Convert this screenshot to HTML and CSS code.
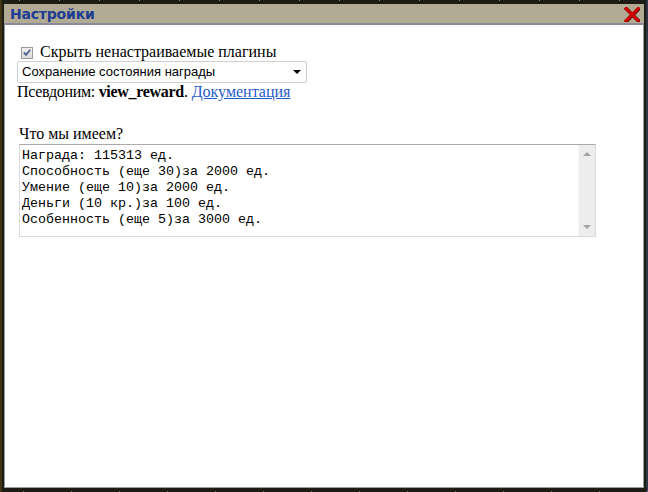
FILE: index.html
```html
<!DOCTYPE html>
<html>
<head>
<meta charset="utf-8">
<link rel="stylesheet" href="styles.css">
</head>
<body>
<div class="window">
  <div class="titlebar">
    <span class="title">Настройки</span>
    <svg class="close" width="16" height="15" viewBox="0 0 16 15">
      <path d="M2 1.5 L14 13.5 M14 1.5 L2 13.5" stroke="#7a0000" stroke-width="3.6" stroke-linecap="square" transform="translate(0.6 0.6)"/>
      <path d="M2 1.5 L14 13.5 M14 1.5 L2 13.5" stroke="#d00000" stroke-width="2.8" stroke-linecap="square"/>
    </svg>
  </div>
  <div class="content">
    <label class="check-row">
      <span class="checkbox">
        <svg width="11" height="11" viewBox="0 0 11 11"><path d="M2 5.5 L4.5 8 L9 2.5" fill="none" stroke="#4d5f93" stroke-width="2"/></svg>
      </span>
      <span>Скрыть ненастраиваемые плагины</span>
    </label>
    <div class="select">
      <span>Сохранение состояния награды</span>
      <span class="arrow"></span>
    </div>
    <div class="alias"><span class="tight">Псевдоним: <b>view_reward</b>.</span> <a href="#">Документация</a></div>
    <div class="label">Что мы имеем?</div>
    <div class="textarea">
      <pre class="text">Награда: 115313 ед.
Способность (еще 30)за 2000 ед.
Умение (еще 10)за 2000 ед.
Деньги (10 кр.)за 100 ед.
Особенность (еще 5)за 3000 ед.</pre>
      <div class="scrollbar">
        <span class="up"></span>
        <span class="down"></span>
      </div>
    </div>
  </div>
</div>
</body>
</html>
```

FILE: styles.css
```css
html, body {
  margin: 0;
  padding: 0;
}
body {
  width: 648px;
  height: 492px;
  overflow: hidden;
  background: #24231a;
}
.window {
  box-sizing: border-box;
  width: 648px;
  height: 492px;
  padding: 4px 4px 4px 4px;
  display: flex;
  flex-direction: column;
  background:
    repeating-linear-gradient(90deg, transparent 0 19px, #8d8a70 19px 20px, transparent 20px 40px) top / 100% 1px no-repeat,
    repeating-linear-gradient(90deg, transparent 0 23px, #7c7a66 23px 24px, transparent 24px 48px) bottom / 100% 1px no-repeat,
    linear-gradient(90deg, #3f3515 0 2px, transparent 2px) left / 4px 100% no-repeat,
    linear-gradient(90deg, transparent 2px, #2f3546 2px) right / 4px 100% no-repeat,
    #1d1c15;
}
.titlebar {
  height: 19px;
  background: #b1aa95;
  border-bottom: 2px solid #8a8a98;
  display: flex;
  align-items: center;
  justify-content: space-between;
  padding: 0 4px 0 6px;
}
.title {
  font-family: "DejaVu Sans", Verdana, sans-serif;
  font-weight: bold;
  font-size: 14px;
  color: #1d3c92;
  letter-spacing: -0.2px;
}
.close {
  display: block;
  margin-top: 1px;
}
.content {
  flex: 1;
  background: #fff;
  border-left: 1px solid #9c9ca6;
  border-right: 1px solid #9c9ca6;
  border-bottom: 1px solid #9c9ca6;
  padding: 18px 0 0 12px;
  font-family: "Liberation Serif", "Times New Roman", serif;
  font-size: 16px;
  line-height: 18px;
  color: #000;
}
.check-row {
  display: flex;
  align-items: center;
  gap: 7px;
  padding-left: 4px;
  height: 18px;
}
.checkbox {
  box-sizing: border-box;
  width: 12px;
  height: 12px;
  border: 1px solid #9a9a9a;
  background: linear-gradient(#ececec, #dcdcdc);
  display: flex;
  align-items: center;
  justify-content: center;
  margin-top: 1px;
}
.checkbox svg {
  display: block;
}
.select {
  box-sizing: border-box;
  width: 290px;
  height: 22px;
  border: 1px solid #cfcfcf;
  border-radius: 2px;
  display: flex;
  align-items: center;
  justify-content: space-between;
  padding: 0 4px 0 4px;
  font-family: "Liberation Sans", Arial, sans-serif;
  font-size: 13px;
  color: #000;
}
.arrow {
  width: 0;
  height: 0;
  border-left: 4px solid transparent;
  border-right: 4px solid transparent;
  border-top: 4px solid #000;
  margin-right: 1px;
}
.alias {
  height: 18px;
}
.tight {
  letter-spacing: -0.3px;
}
.alias a {
  color: #1f5bcc;
  text-decoration: underline;
}
.label {
  margin-top: 24px;
  padding-left: 2px;
  height: 18px;
}
.textarea {
  box-sizing: border-box;
  margin-top: 1px;
  margin-left: 2px;
  width: 577px;
  height: 93px;
  border: 1px solid #dadada;
  border-top-color: #a9a9a9;
  display: flex;
}
.text {
  flex: 1;
  margin: 0;
  padding: 3px 0 0 2px;
  font-family: "Liberation Mono", "Courier New", monospace;
  font-size: 13.33px;
  line-height: 16px;
  color: #000;
  overflow: hidden;
}
.scrollbar {
  width: 16px;
  background: #ededed;
  border-left: 1px solid #f6f6f6;
  display: flex;
  flex-direction: column;
  justify-content: space-between;
  align-items: center;
  padding: 7px 0 7px 0;
}
.up, .down {
  width: 0;
  height: 0;
  border-left: 4px solid transparent;
  border-right: 4px solid transparent;
}
.up {
  border-bottom: 4px solid #a3a3a3;
}
.down {
  border-top: 4px solid #a3a3a3;
}
```
